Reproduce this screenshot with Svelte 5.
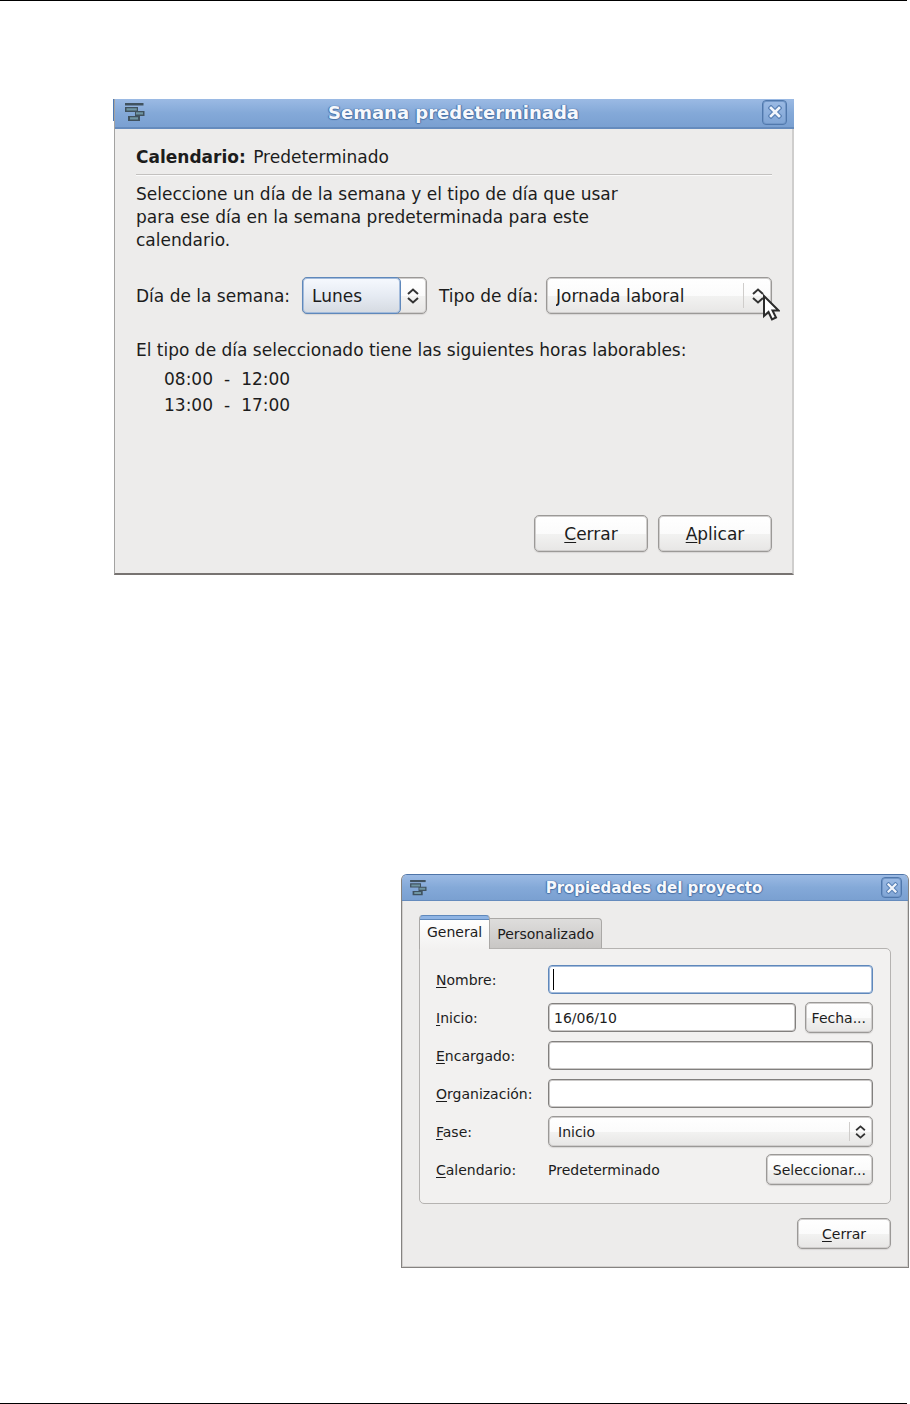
<script lang="ts">
	let weekday = 'Lunes';
	let dayType = 'Jornada laboral';
	let phase = 'Inicio';

	const hours = [
		{ from: '08:00', to: '12:00' },
		{ from: '13:00', to: '17:00' }
	];

	let project = {
		name: '',
		start: '16/06/10',
		manager: '',
		organization: ''
	};
</script>

{#snippet appIcon()}
	<svg class="app-icon" viewBox="0 0 20 19" aria-hidden="true">
		<path d="M0 0h18.500v2.500H0z" fill="#40525f" />
		<path d="M0 4h13v5H0zM10 8h9.500v5H10zM3 13h12v5H3z" fill="#40525f" />
		<path d="M1.500 5.200h10.300v2.400H1.500zM11 9.200h7v2.400h-7zM5 14.200h8v2.400H5z" fill="#6f95a3" />
	</svg>
{/snippet}

{#snippet closeButton()}
	<button class="close" type="button" aria-label="Cerrar ventana">
		<svg viewBox="0 0 14 14" aria-hidden="true">
			<path d="M3 3l8 8M11 3l-8 8" stroke="#5a82b6" stroke-width="5" stroke-linecap="square" />
			<path d="M3 3l8 8M11 3l-8 8" stroke="#f3f6fb" stroke-width="2.6" stroke-linecap="square" />
		</svg>
	</button>
{/snippet}

{#snippet arrows()}
	<svg class="arrows" viewBox="0 0 12 16" aria-hidden="true">
		<path d="M1 6l5-4.500 5 4.500M1 10l5 4.500 5-4.500" fill="none" stroke="#333" stroke-width="2" />
	</svg>
{/snippet}

<div class="page">
	<hr class="rule" />

	<section class="window week">
		<header>
			{@render appIcon()}
			<h2>Semana predeterminada</h2>
			{@render closeButton()}
		</header>
		<div class="content">
			<p class="calendar"><b>Calendario:</b> Predeterminado</p>
			<p class="help">
				Seleccione un día de la semana y el tipo de día que usar para ese día en la semana
				predeterminada para este calendario.
			</p>
			<div class="choices">
				<label for="weekday">Día de la semana:</label>
				<div class="combo split">
					<select id="weekday" bind:value={weekday}>
						<option>Lunes</option>
					</select>
					{@render arrows()}
				</div>
				<label class="second" for="daytype">Tipo de día:</label>
				<div class="combo wide">
					<select id="daytype" bind:value={dayType}>
						<option>Jornada laboral</option>
					</select>
					{@render arrows()}
					<svg class="cursor" viewBox="0 0 18 28" aria-hidden="true">
						<path
							d="M2 2v20l4.500-4 3.500 7.500 4-2-3.500-7h6z"
							fill="#fff"
							stroke="#2b2b2b"
							stroke-width="2"
						/>
					</svg>
				</div>
			</div>
			<p class="intro">El tipo de día seleccionado tiene las siguientes horas laborables:</p>
			<ul>
				{#each hours as { from, to }}
					<li><span>{from}</span><span>-</span><span>{to}</span></li>
				{/each}
			</ul>
			<div class="actions">
				<button type="button"><u>C</u>errar</button>
				<button type="button"><u>A</u>plicar</button>
			</div>
		</div>
	</section>

	<section class="window project">
		<header>
			{@render appIcon()}
			<h2>Propiedades del proyecto</h2>
			{@render closeButton()}
		</header>
		<div class="content">
			<div class="tabs" role="tablist">
				<button type="button" role="tab" class="tab active" aria-selected="true">General</button>
				<button type="button" role="tab" class="tab" aria-selected="false">Personalizado</button>
			</div>
			<div class="panel" role="tabpanel">
				<label for="name"><u>N</u>ombre:</label>
				<div class="focused"><input id="name" type="text" bind:value={project.name} /></div>

				<label for="start"><u>I</u>nicio:</label>
				<div class="field">
					<input id="start" type="text" bind:value={project.start} />
					<button type="button">Fecha...</button>
				</div>

				<label for="manager"><u>E</u>ncargado:</label>
				<input id="manager" type="text" bind:value={project.manager} />

				<label for="organization"><u>O</u>rganización:</label>
				<input id="organization" type="text" bind:value={project.organization} />

				<label for="phase"><u>F</u>ase:</label>
				<div class="combo">
					<select id="phase" bind:value={phase}>
						<option>Inicio</option>
					</select>
					{@render arrows()}
				</div>

				<label for="calendar"><u>C</u>alendario:</label>
				<div class="field">
					<span>Predeterminado</span>
					<button id="calendar" type="button">Seleccionar...</button>
				</div>
			</div>
			<div class="actions">
				<button type="button"><u>C</u>errar</button>
			</div>
		</div>
	</section>

	<hr class="rule bottom" />
</div>

<style>
	:global(body) {
		background: #fff;
	}

	.page,
	button,
	input,
	select {
		font-family: 'DejaVu Sans', Verdana, sans-serif;
		color: #1c1c1c;
	}

	.page {
		display: flex;
		flex-direction: column;
		min-height: 100vh;
	}

	.page,
	.page * {
		box-sizing: border-box;
	}

	p,
	h2,
	ul {
		margin: 0;
		padding: 0;
	}

	u {
		text-decoration-thickness: 1px;
		text-underline-offset: 2px;
	}

	.rule {
		width: calc(100% - 3px);
		height: 1px;
		margin: 0;
		border: 0;
		background: #000;
	}

	.bottom {
		margin-top: auto;
	}

	/* window frame */
	.window {
		position: relative;
		display: flex;
		flex-direction: column;
		background: #edeceb;
	}

	header {
		display: flex;
		align-items: center;
		background: linear-gradient(#9bbae4, #84a9d8 50%, #7aa0d1);
		border-bottom: 2px solid #658bbd;
	}

	h2 {
		flex: 1;
		text-align: center;
		color: #f6f8fc;
		font-weight: bold;
		text-shadow:
			0 1px 1px #4a71a6,
			1px 0 1px #4a71a6,
			-1px 0 1px #4a71a6;
	}

	.close {
		display: grid;
		place-items: center;
		padding: 0;
		border: 1px solid #5078ac;
		border-radius: 4px;
		background: linear-gradient(#9bbae4, #80a5d5);
		box-shadow: inset 0 0 0 1px #7297c8;
	}

	.close svg {
		width: 14px;
		height: 14px;
	}

	.content {
		display: flex;
		flex-direction: column;
		flex: 1;
	}

	.actions {
		display: flex;
		justify-content: flex-end;
		gap: 10px;
		margin-top: auto;
	}

	.actions button,
	.field button,
	.combo {
		border: 1px solid #9b9997;
		border-radius: 5px;
		background: linear-gradient(#fff, #fbfbfb 50%, #f2f2f1 52%, #e7e6e5);
		box-shadow:
			inset 0 0 0 1px #d0cecd,
			0 1px 1px #d8d6d5;
	}

	.actions button,
	.field button {
		padding: 0;
		font-size: inherit;
	}

	.combo {
		position: relative;
		display: flex;
		min-width: 0;
	}

	select {
		appearance: none;
		flex: 1;
		min-width: 0;
		border: 0;
		outline: 0;
		background: none;
		font-size: inherit;
	}

	.arrows {
		position: absolute;
		right: 7px;
		top: 50%;
		translate: 0 -50%;
		width: 12px;
		height: 16px;
		pointer-events: none;
	}

	/* default week */
	.week {
		width: 75%;
		max-width: 680px;
		min-height: 476px;
		margin: 98px 0 0 114px;
		border: solid #a3a2a1;
		border-width: 0 2px 2px 1px;
		border-right-color: #cfcecd;
		border-bottom-color: #777371;
		font-size: 17px;
		line-height: 24px;
	}

	/* edge of the window behind */
	.week::before {
		content: '';
		position: absolute;
		left: -2px;
		top: 0;
		width: 1px;
		height: 22px;
		background: #4c7ab5;
	}

	.week header {
		height: 30px;
		margin-right: -2px;
		padding: 0 7px 2px 10px;
	}

	.week .app-icon {
		width: 20px;
		height: 19px;
	}

	.week h2 {
		padding-top: 2px;
		font-size: 18px;
	}

	.week .close {
		width: 25px;
		height: 25px;
	}

	.week .content {
		padding: 16px 20px 21px 21px;
	}

	.calendar {
		padding-bottom: 5px;
		border-bottom: 1px solid #c3c1bf;
		box-shadow: 0 1px #fafafa;
	}

	.calendar b {
		margin-right: 2px;
	}

	.help {
		max-width: 510px;
		margin-top: 8px;
		line-height: 23px;
	}

	.choices {
		display: grid;
		grid-template-columns: 166px 125px 119px 1fr;
		align-items: center;
		height: 37px;
		margin-top: 25px;
		white-space: nowrap;
	}

	.choices .combo {
		height: 37px;
	}

	.split select {
		flex: none;
		width: 99px;
		height: 37px;
		margin: -1px;
		padding: 0 9px;
		border: 1px solid #5f88bb;
		border-radius: 5px;
		background: linear-gradient(#f6f9fe, #e6ebf3 50%, #d5dae1);
		box-shadow: inset 0 0 0 1px #a3bbdb;
	}

	.second {
		margin-left: 12px;
	}

	.wide select,
	.project select {
		padding: 0 30px 0 9px;
	}

	.wide::after,
	.project .combo::after {
		content: '';
		position: absolute;
		right: 27px;
		top: 5px;
		bottom: 5px;
		width: 1px;
		background: #cfcdcb;
	}

	.project .combo::after {
		right: 22px;
	}

	.cursor {
		position: absolute;
		right: -9px;
		top: 16px;
		width: 18px;
		height: 28px;
	}

	.intro {
		margin-top: 24px;
	}

	ul {
		margin-top: 4px;
		padding-left: 28px;
		list-style: none;
	}

	li {
		display: flex;
		gap: 11px;
		line-height: 26px;
	}

	.week .actions button {
		width: 114px;
		height: 37px;
	}

	/* project properties */
	.project {
		width: 56%;
		max-width: 508px;
		min-height: 394px;
		margin: 299px 1px 0 auto;
		border: 1px solid #858381;
		border-top-color: #4f75a8;
		border-radius: 6px 6px 0 0;
		box-shadow: inset 0 0 0 1px #d2d0ce;
		font-size: 14px;
		line-height: 20px;
	}

	.project header {
		height: 26px;
		padding: 0 6px 0 8px;
		border-bottom-width: 1px;
		border-radius: 5px 5px 0 0;
	}

	.project .app-icon {
		width: 17px;
		height: 16px;
	}

	.project h2 {
		font-size: 15px;
	}

	.project .close {
		width: 21px;
		height: 21px;
	}

	.project .close svg {
		width: 12px;
		height: 12px;
	}

	.project .content {
		padding: 14px 17px 18px;
	}

	.tabs {
		display: flex;
		align-items: flex-end;
	}

	.tab {
		height: 30px;
		padding: 0 7px;
		border: 1px solid #aaa8a6;
		border-left: 0;
		border-bottom: 0;
		border-radius: 0 4px 0 0;
		background: linear-gradient(#dedddc, #c9c7c5);
		font-size: 14px;
	}

	.active {
		position: relative;
		height: 34px;
		margin-bottom: -1px;
		padding-bottom: 2px;
		border-left: 1px solid #aaa8a6;
		border-top: 1px solid #5f88bb;
		border-radius: 4px 4px 0 0;
		background: linear-gradient(#8fb4e4 3px, #5f88bb 3px, #5f88bb 4px, #fff 4px, #f2f1f0);
	}

	.panel {
		display: grid;
		grid-template-columns: 112px 1fr;
		grid-auto-rows: 31px;
		row-gap: 7px;
		align-items: center;
		padding: 15px 17px 18px 16px;
		border: 1px solid #b5b3b1;
		border-radius: 0 5px 5px 5px;
		background: #f2f1f0;
	}

	input {
		width: 100%;
		height: 29px;
		min-width: 0;
		padding: 0 5px;
		border: 1px solid #82807e;
		border-radius: 4px;
		outline: 0;
		background: #fff;
		box-shadow: inset 0 0 0 1px #cbc9c8;
		font-size: 14px;
	}

	.focused {
		position: relative;
		display: flex;
	}

	.focused input {
		border-color: #5f88bb;
		box-shadow: inset 0 0 0 1px #a3bbdb;
	}

	/* text caret */
	.focused::after {
		content: '';
		position: absolute;
		left: 5px;
		top: 4px;
		bottom: 4px;
		width: 1px;
		background: #000;
	}

	.field {
		display: flex;
		align-items: center;
		justify-content: space-between;
		gap: 9px;
	}

	.field button {
		flex: none;
		height: 31px;
		padding: 0 6px;
	}

	.project .combo {
		height: 31px;
	}

	.project .arrows {
		right: 6px;
		width: 11px;
		height: 14px;
	}

	.project .actions button {
		width: 94px;
		height: 31px;
	}
</style>
